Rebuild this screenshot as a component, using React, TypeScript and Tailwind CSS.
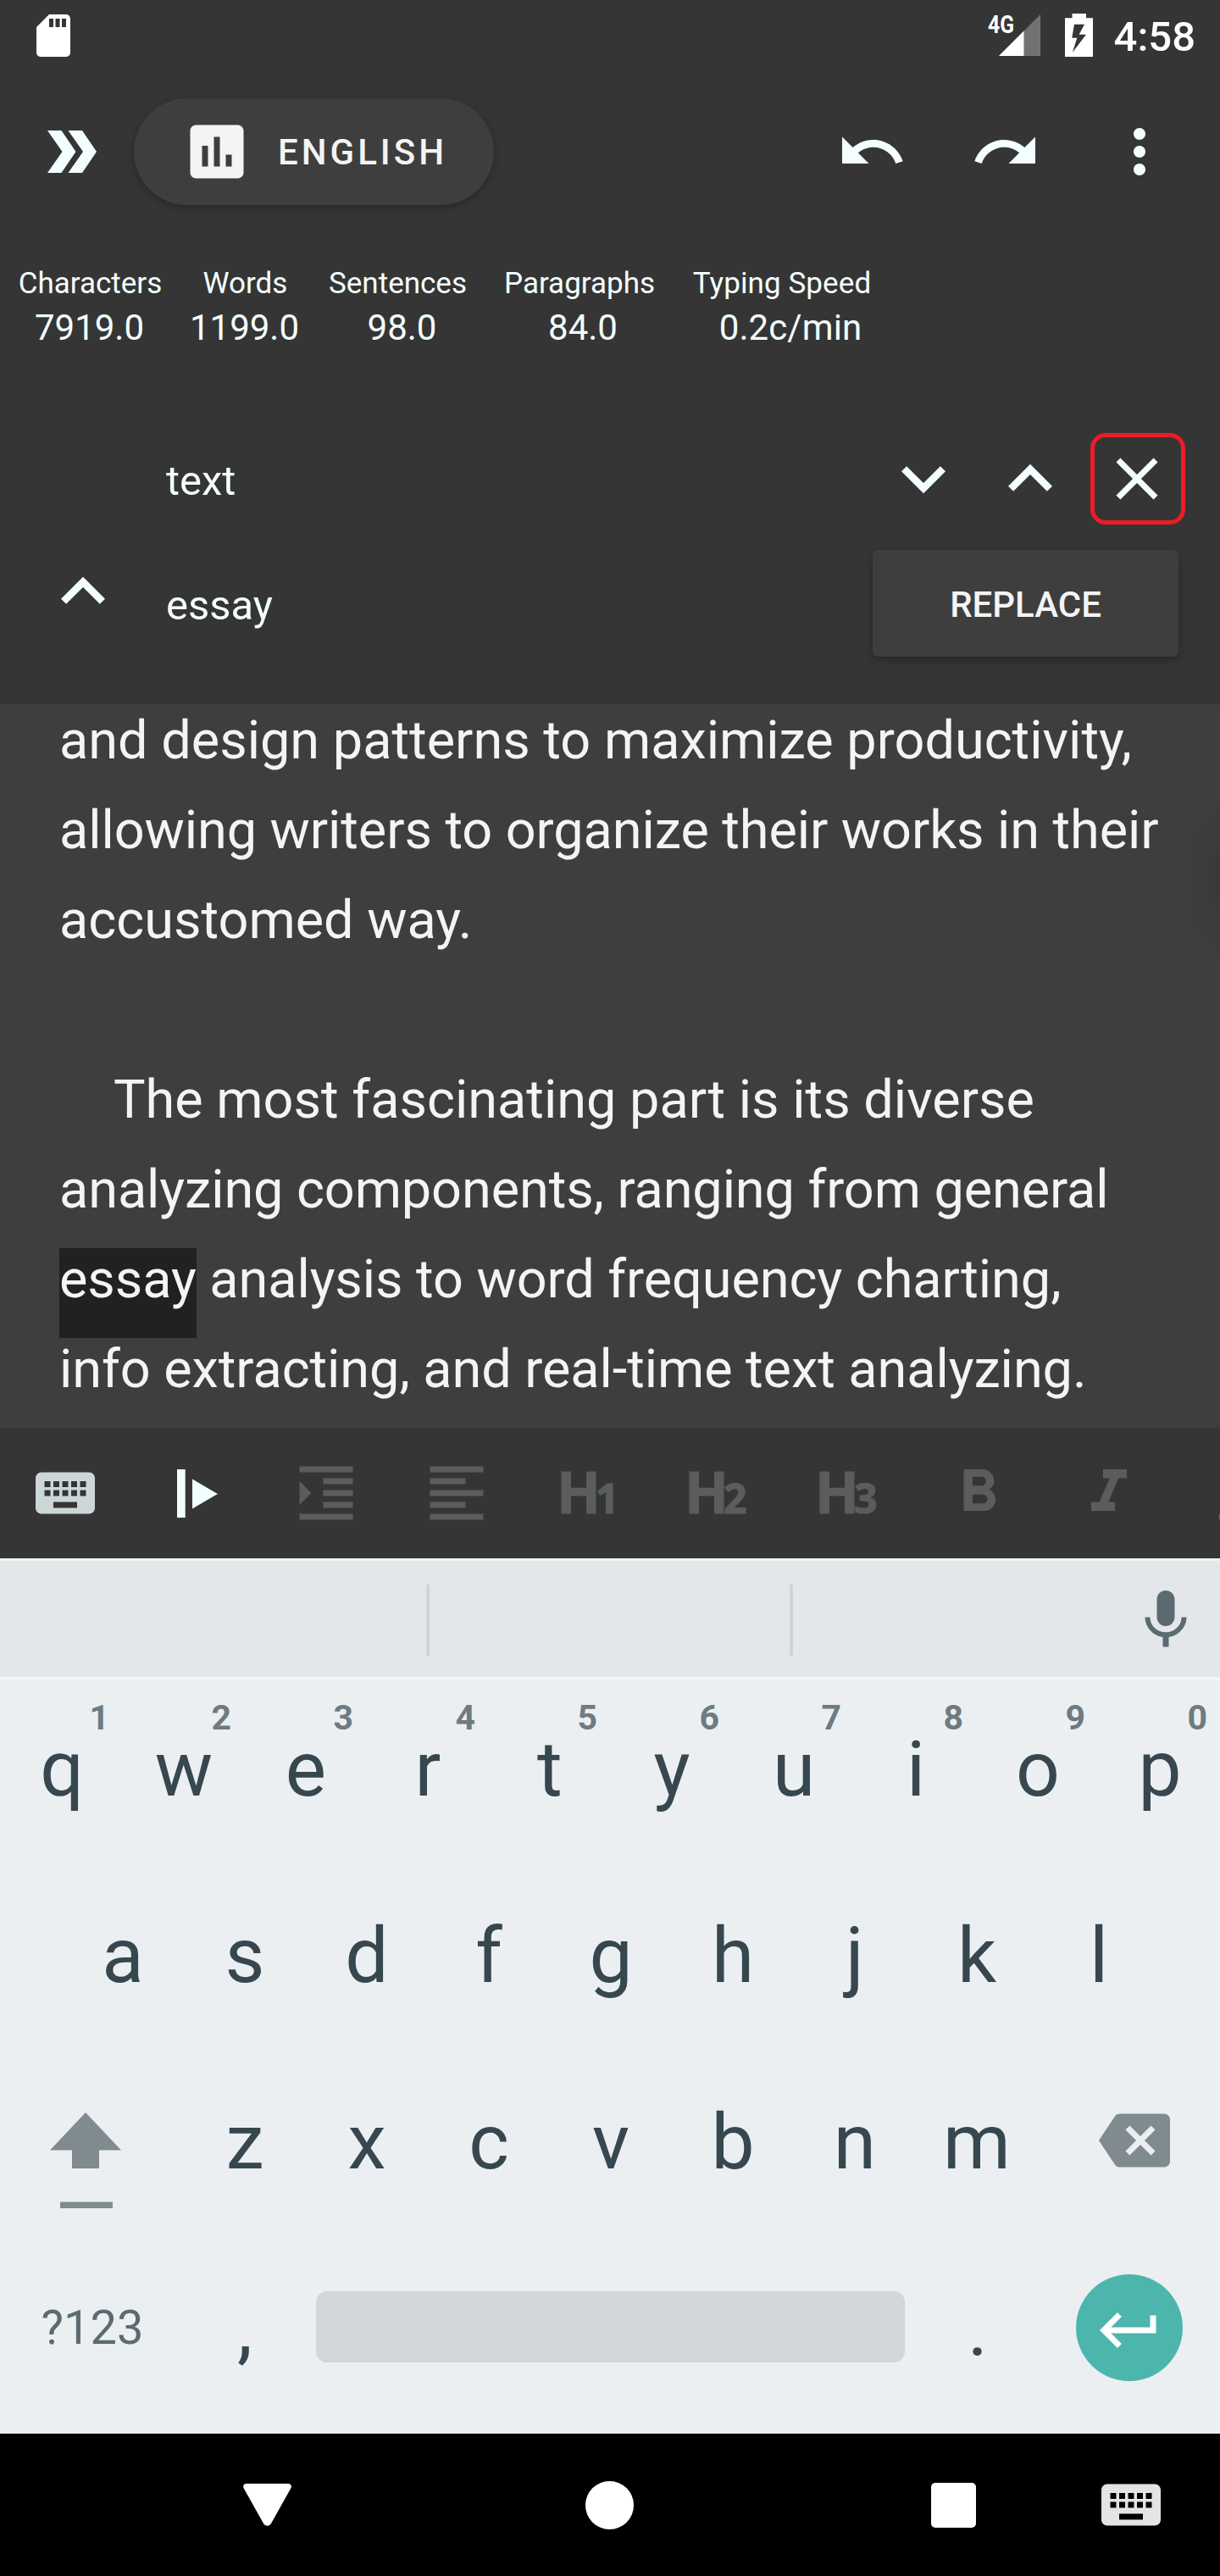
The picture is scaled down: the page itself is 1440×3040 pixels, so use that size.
import React from "react";

type IconProps = { d: string; className?: string };

function Icon({ d, className = "size-[84px]" }: IconProps) {
  return (
    <svg viewBox="0 0 24 24" fill="currentColor" className={`shrink-0 ${className}`} aria-hidden="true">
      <path d={d} />
    </svg>
  );
}

const ICONS = {
  sdCard:
    "M18 2h-8L4.02 8 4 20c0 1.1.9 2 2 2h12c1.1 0 2-.9 2-2V4c0-1.1-.9-2-2-2zm-6 6h-2V4h2v4zm3 0h-2V4h2v4zm3 0h-2V4h2v4z",
  assessment:
    "M19 3H5c-1.1 0-2 .9-2 2v14c0 1.1.9 2 2 2h14c1.1 0 2-.9 2-2V5c0-1.1-.9-2-2-2zM9 17H7v-7h2v7zm4 0h-2V7h2v10zm4 0h-2v-4h2v4z",
  undo: "M12.5 8c-2.65 0-5.05.99-6.9 2.6L2 7v9h9l-3.62-3.62c1.39-1.16 3.16-1.88 5.12-1.88 3.54 0 6.55 2.31 7.6 5.5l2.37-.78C21.08 11.03 17.15 8 12.5 8z",
  redo: "M18.4 10.6C16.55 8.99 14.15 8 11.5 8c-4.65 0-8.58 3.03-9.96 7.22L3.9 16c1.05-3.19 4.05-5.5 7.6-5.5 1.95 0 3.73.72 5.12 1.88L13 16h9V7l-3.6 3.6z",
  more: "M12 8c1.1 0 2-.9 2-2s-.9-2-2-2-2 .9-2 2 .9 2 2 2zm0 2c-1.1 0-2 .9-2 2s.9 2 2 2 2-.9 2-2-.9-2-2-2zm0 6c-1.1 0-2 .9-2 2s.9 2 2 2 2-.9 2-2-.9-2-2-2z",
  up: "M12 8l-6 6 1.41 1.41L12 10.83l4.59 4.58L18 14z",
  down: "M16.59 8.59L12 13.17 7.41 8.59 6 10l6 6 6-6z",
  close:
    "M19 6.41L17.59 5 12 10.59 6.41 5 5 6.41 10.59 12 5 17.59 6.41 19 12 13.41 17.59 19 19 17.59 13.41 12z",
  keyboard:
    "M20 5H4c-1.1 0-1.99.9-1.99 2L2 17c0 1.1.9 2 2 2h16c1.1 0 2-.9 2-2V7c0-1.1-.9-2-2-2zm-9 3h2v2h-2V8zm0 3h2v2h-2v-2zM8 8h2v2H8V8zm0 3h2v2H8v-2zm-1 2H5v-2h2v2zm0-3H5V8h2v2zm9 7H8v-2h8v2zm0-4h-2v-2h2v2zm0-3h-2V8h2v2zm3 3h-2v-2h2v2zm0-3h-2V8h2v2z",
  indent:
    "M3 21h18v-2H3v2zM3 8v8l4-4-4-4zm8 9h10v-2H11v2zM3 3v2h18V3H3zm8 6h10V7H11v2zm0 4h10v-2H11v2z",
  alignLeft:
    "M15 15H3v2h12v-2zm0-8H3v2h12V7zM3 13h18v-2H3v2zm0 8h18v-2H3v2zM3 3v2h18V3H3z",
  bold: "M15.6 10.79c.97-.67 1.65-1.77 1.65-2.79 0-2.26-1.75-4-4-4H7v14h7.04c2.09 0 3.71-1.7 3.71-3.79 0-1.52-.86-2.82-2.15-3.42zM10 6.5h3c.83 0 1.5.67 1.5 1.5s-.67 1.5-1.5 1.5h-3v-3zm3.5 9H10v-3h3.5c.83 0 1.5.67 1.5 1.5s-.67 1.5-1.5 1.5z",
  italic: "M10 4v3h2.21l-3.42 8H6v3h8v-3h-2.21l3.42-8H18V4z",
  underline:
    "M12 17c3.31 0 6-2.69 6-6V3h-2.5v8c0 1.93-1.57 3.5-3.5 3.5S8.5 12.93 8.5 11V3H6v8c0 3.31 2.69 6 6 6zm-7 2v2h14v-2H5z",
  mic: "M12 14c1.66 0 2.99-1.34 2.99-3L15 5c0-1.66-1.34-3-3-3S9 3.34 9 5v6c0 1.66 1.34 3 3 3zm5.3-3c0 3-2.54 5.1-5.3 5.1S6.7 14 6.7 11H5c0 3.41 2.72 6.23 6 6.72V21h2v-3.28c3.28-.48 6-3.3 6-6.72h-1.7z",
  backspace:
    "M22 3H7c-.69 0-1.23.35-1.59.88L0 12l5.41 8.11c.36.53.9.89 1.59.89h15c1.1 0 2-.9 2-2V5c0-1.1-.9-2-2-2zm-3 12.59L17.59 17 14 13.41 10.41 17 9 15.59 12.59 12 9 8.41 10.41 7 14 10.59 17.59 7 19 8.41 15.41 12 19 15.59z",
  enter: "M19 7v4H5.83l3.58-3.59L8 6l-6 6 6 6 1.41-1.41L5.83 13H21V7z",
};

function StatusBar() {
  return (
    <header className="flex h-[84px] items-center pr-[29px] pl-[33px] text-white">
      <Icon d={ICONS.sdCard} className="size-[60px]" />
      <div className="ml-auto flex items-center">
        <svg width="64" height="84" viewBox="0 0 64 84" className="mr-[28px]" aria-label="4G signal">
          <path d="M64 17V66H15Z" fill="#727272" />
          <path d="M44.5 36.5V66H15Z" fill="#fff" />
          <text
            x="2"
            y="39"
            textLength="31"
            lengthAdjust="spacingAndGlyphs"
            fill="#fff"
            className="font-['Roboto'] text-[29px] font-bold"
          >
            4G
          </text>
        </svg>
        <svg width="35" height="84" viewBox="0 0 35 84" className="mr-[24px]" aria-label="Battery charging">
          <path
            fill="#fff"
            fillRule="evenodd"
            d="M9.500 16H26V21.300H34V67H1V21.300H9.500ZM12 28.700H24L17.600 40.700H26L9.800 62L15.300 44.700H9.200Z"
          />
        </svg>
        <span className="pt-[3px] text-[49px] leading-none font-medium">4:58</span>
      </div>
    </header>
  );
}

function AppBar() {
  return (
    <div className="flex h-[190px] items-center pr-[53px] pl-[56px] text-[#f3ffff]">
      <svg width="58" height="50" viewBox="0 0 58 50" fill="currentColor" aria-hidden="true">
        <path d="M0 0H16.500L33.500 25L16.500 50H0L17.500 25ZM24.500 0H41L58 25L41 50H24.500L42 25Z" />
      </svg>
      <button className="ml-[44px] flex h-[126px] w-[425px] items-center rounded-full bg-[#3e3e3e] pl-[56px] text-[#f4f4f4] shadow-[0_3px_8px_rgba(0,0,0,0.28)]">
        <Icon d={ICONS.assessment} />
        <span className="ml-[30px] pt-[2px] text-[42px] leading-none font-medium tracking-[4px]">ENGLISH</span>
      </button>
      <div className="ml-auto flex gap-[74px]">
        <Icon d={ICONS.undo} />
        <Icon d={ICONS.redo} />
        <Icon d={ICONS.more} />
      </div>
    </div>
  );
}

const STATS = [
  { label: "Characters", value: "7919.0", col: "w-[213px]", shift: "pr-[2px]" },
  { label: "Words", value: "1199.0", col: "w-[153px]", shift: "pr-[2px]" },
  { label: "Sentences", value: "98.0", col: "w-[207px]", shift: "pl-[10px]" },
  { label: "Paragraphs", value: "84.0", col: "w-[222px]", shift: "pl-2" },
  { label: "Typing Speed", value: "0.2c/min", col: "w-[256px] tracking-[0.1px]", shift: "pl-[20px]" },
];

function Stats() {
  return (
    <div className="flex h-[166px] pt-[35px] text-[#f3ffff]">
      {STATS.map((s) => (
        <div key={s.label} className={`flex flex-col items-center whitespace-nowrap ${s.col}`}>
          <span className="text-[35px] leading-[52px]">{s.label}</span>
          <span className={`text-[42px] leading-[52px] ${s.shift}`}>{s.value}</span>
        </div>
      ))}
    </div>
  );
}

function SearchPanel() {
  return (
    <div className="flex h-[391px] flex-col pt-[62px] text-[#f3ffff]">
      <div className="flex h-[126px] items-center pr-[35px] pl-[196px]">
        <span className="flex-1 pt-[6px] text-[49px] leading-[60px]">text</span>
        <div className="flex w-[126px] justify-center">
          <Icon d={ICONS.down} className="size-[104px]" />
        </div>
        <div className="flex w-[126px] justify-center">
          <Icon d={ICONS.up} className="size-[104px]" />
        </div>
        <div className="flex w-[126px] justify-center">
          <div className="ml-[2px] flex h-[108px] w-[112px] items-center justify-center rounded-[18px] border-[5px] border-[#ed1c24] pr-[2px]">
            <Icon d={ICONS.close} />
          </div>
        </div>
      </div>
      <div className="flex h-[168px] items-center pr-[49px]">
        <div className="flex w-[196px] justify-center pb-7">
          <Icon d={ICONS.up} className="size-[104px]" />
        </div>
        <span className="flex-1 pt-[6px] text-[49px] leading-[60px]">essay</span>
        <button className="h-[126px] w-[361px] rounded-[7px] bg-[#3e3e3e] pt-[3px] text-[42px] leading-none font-medium text-[#f4f4f4] shadow-[0_4px_8px_rgba(0,0,0,0.28)]">
          REPLACE
        </button>
      </div>
    </div>
  );
}

function Editor() {
  return (
    <main className="relative h-[854px] overflow-hidden bg-[#3e3e3e] pl-[70px] text-[63px] leading-[106px] whitespace-nowrap text-[#f4f4f4]">
      <div className="-mt-[10px]">
        <p>and design patterns to maximize productivity,</p>
        <p className="tracking-[-0.08px]">allowing writers to organize their works in their</p>
        <p>accustomed way.</p>
        <p>&nbsp;</p>
        <p className="indent-[64px]">The most fascinating part is its diverse</p>
        <p className="tracking-[-0.09px]">analyzing components, ranging from general</p>
        <p className="tracking-[-0.07px]">
          <mark className="bg-[#212121] pb-[33px] text-inherit">essay</mark> analysis to word frequency charting,
        </p>
        <p className="tracking-[-0.06px]">info extracting, and real-time text analyzing.</p>
      </div>
      {/* Shadow cast by the fast-scroll handle parked past the right edge */}
      <div className="absolute top-[148px] -right-[60px] h-[110px] w-[60px] rounded-[10px] shadow-[0_4px_44px_rgba(0,0,0,0.14)]" />
    </main>
  );
}

function Heading({ level, offset = "pl-[38px]" }: { level: string; offset?: string }) {
  return (
    <div
      className={`w-[154px] shrink-0 font-['Open_Sans'] font-bold whitespace-nowrap [-webkit-text-stroke:1.2px_#5b5d5d] ${offset}`}
    >
      <span className="text-[68px] leading-[150px]">H</span>
      <span className="-ml-[6px] text-[48px] leading-none">{level}</span>
    </div>
  );
}

function Tool({ children }: { children: React.ReactNode }) {
  return <div className="flex w-[154px] shrink-0 items-center justify-center">{children}</div>;
}

function FormatBar() {
  return (
    <div className="flex h-[154px] overflow-hidden text-[#5b5d5d]">
      <Tool>
        <Icon d={ICONS.keyboard} className="size-[84px] text-[#ced7d8]" />
      </Tool>
      <Tool>
        <svg width="48" height="57" viewBox="0 0 48 57" fill="#f3ffff" className="ml-[4px]" aria-hidden="true">
          <path d="M0 0H9.700V57H0ZM18 11.500L48 29L18 46.500Z" />
        </svg>
      </Tool>
      <Tool>
        <Icon d={ICONS.indent} />
      </Tool>
      <Tool>
        <Icon d={ICONS.alignLeft} />
      </Tool>
      <Heading level="1" offset="pl-[41px]" />
      <Heading level="2" />
      <Heading level="3" />
      <Tool>
        <Icon d={ICONS.bold} />
      </Tool>
      <Tool>
        <Icon d={ICONS.italic} />
      </Tool>
      <Tool>
        <Icon d={ICONS.underline} />
      </Tool>
    </div>
  );
}

function Suggestions() {
  return (
    <div className="flex h-[144px] items-center border-t-[3px] border-b-4 border-t-[#f0f2f3] border-b-[#f4f6f8] bg-[#e3e7ea] pt-[3px]">
      <div className="h-[84px] w-[507px] border-r-4 border-[#cfd3d6]" />
      <div className="h-[84px] w-[429px] border-r-4 border-[#cfd3d6]" />
      <Icon d={ICONS.mic} className="ml-auto size-[84px] text-[#5c6a71]" />
      <div className="w-[22px]" />
    </div>
  );
}

function Key({ label, hint }: { label: string; hint?: string }) {
  return (
    <div className="relative h-[220px] w-[144px] shrink-0 pl-[2px] text-center text-[91px] leading-[210px]">
      {label}
      {hint && (
        <span className="absolute top-[20px] right-[15px] text-[41px] leading-[48px] font-bold text-[#6e7b80]">
          {hint}
        </span>
      )}
    </div>
  );
}

function Keyboard() {
  return (
    <div className="h-[889px] bg-[#ebeff2] text-[#37474f]">
      <div className="flex">
        {"qwertyuiop".split("").map((k, i) => (
          <Key key={k} label={k} hint={String((i + 1) % 10)} />
        ))}
      </div>
      <div className="flex justify-center">
        {"asdfghjkl".split("").map((k) => (
          <Key key={k} label={k} />
        ))}
      </div>
      <div className="flex">
        <div className="w-[216px] pt-[70px] pl-[59px]">
          <svg width="84" height="114" viewBox="0 0 84 114" fill="#808b8f" aria-label="Shift">
            <path d="M42 0L84 44.500H58V66H26V44.500H0ZM12 105.500H74V113H12Z" />
          </svg>
        </div>
        {"zxcvbnm".split("").map((k) => (
          <Key key={k} label={k} />
        ))}
        <div className="pt-[61px] pl-[73px] text-[#808b8f]">
          <Icon d={ICONS.backspace} />
        </div>
      </div>
      <div className="flex">
        <div className="w-[216px] pl-[2px] text-center text-[56px] leading-[208px] text-[#5c6a71]">?123</div>
        <Key label="," />
        <div className="mt-[61px] ml-[13px] h-[84px] w-[695px] rounded-[13px] bg-[#d1d6d9]" />
        <div className="w-[13px]" />
        <Key label="." />
        <div className="mt-[41px] ml-[45px] flex size-[126px] items-center justify-center rounded-full bg-[#4db6ac] pt-[6px] text-white">
          <Icon d={ICONS.enter} />
        </div>
      </div>
    </div>
  );
}

function NavBar() {
  return (
    <nav className="flex h-[168px] items-center bg-black text-white">
      <svg width="57" height="50" viewBox="0 0 57 50" fill="#fff" className="ml-[287px]" aria-label="Back">
        <path d="M4 0H53C56.500 0 58 3.500 56 6L33 47C31 50.500 26 50.500 24 47L1 6C-1 3.500 .5 0 4 0Z" />
      </svg>
      <div className="ml-[347px] size-[57px] rounded-full bg-white" />
      <div className="mt-px ml-[351px] size-[53px] rounded-[5px] bg-white" />
      <Icon d={ICONS.keyboard} className="ml-[141px] size-[84px] text-[#e4e4e4]" />
    </nav>
  );
}

export default function App() {
  return (
    <div className="h-[3040px] w-[1440px] overflow-hidden bg-[#353535] font-['Roboto',sans-serif]">
      <StatusBar />
      <AppBar />
      <Stats />
      <SearchPanel />
      <Editor />
      <FormatBar />
      <Suggestions />
      <Keyboard />
      <NavBar />
    </div>
  );
}
